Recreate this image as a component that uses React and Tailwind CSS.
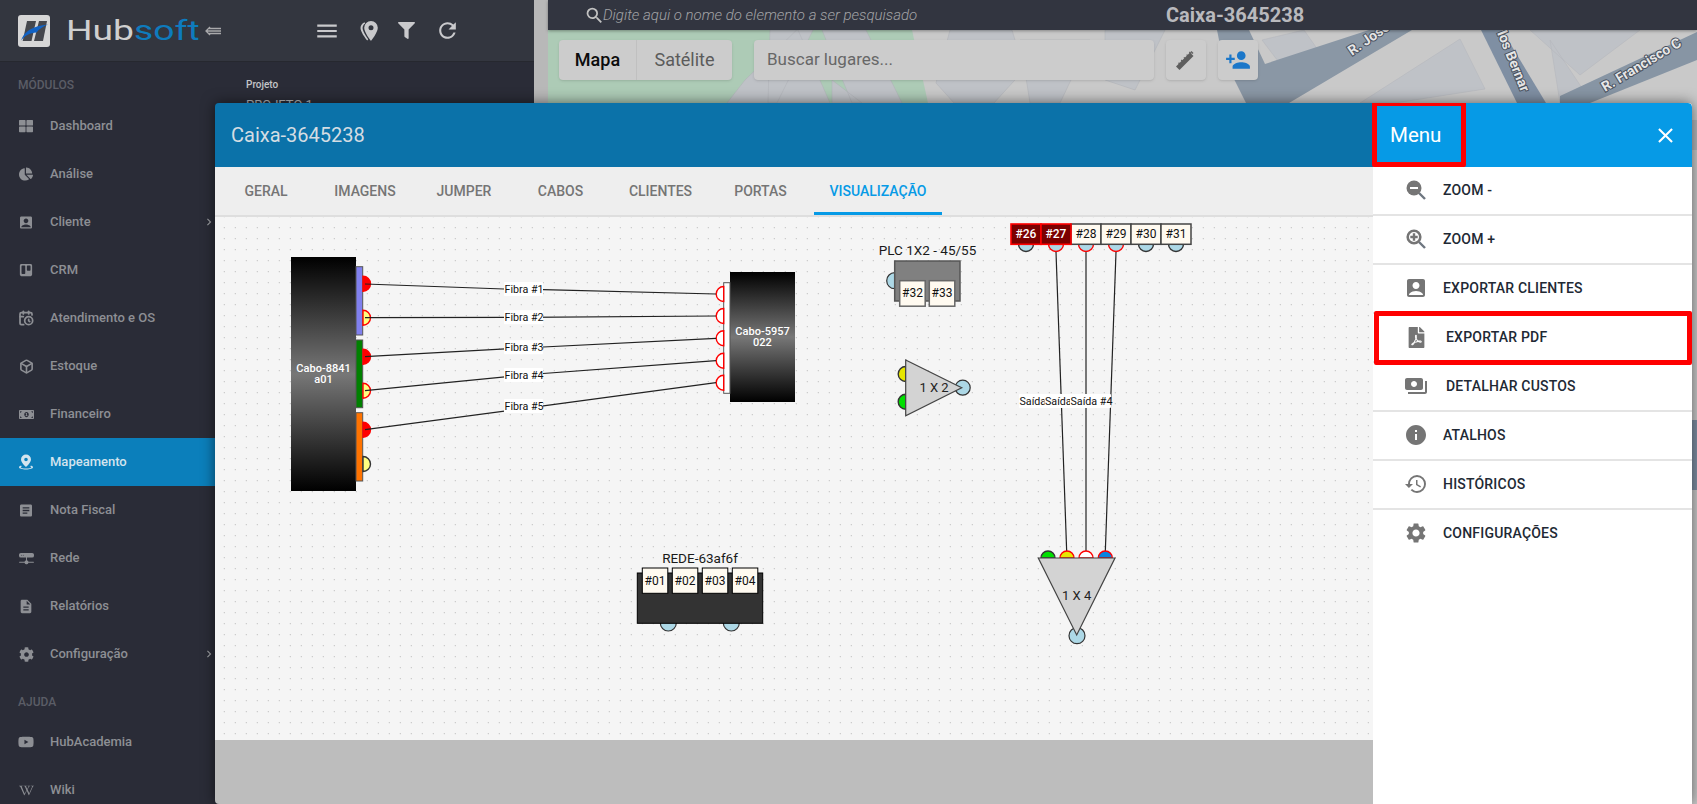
import { CalendarClock, Box } from "lucide-react";
import {
  FaThLarge, FaChartPie, FaTrello, FaMoneyBillAlt, FaCog, FaYoutube, FaWikipediaW, FaFilter, FaFilePdf,
} from "react-icons/fa";
import { BsHddNetworkFill } from "react-icons/bs";
import {
  MdAccountBox, MdArticle, MdDescription, MdMenu, MdRefresh, MdSearch, MdPersonAdd,
  MdPayments, MdInfo, MdHistory, MdSettings, MdClose, MdChevronRight,
} from "react-icons/md";

function PinDrop({ size = 16 }) {
  return (
    <svg width={size} height={size} viewBox="0 0 16 16" fill="currentColor">
      <path d="M8 0.5a5 5 0 0 0-5 5c0 3.4 5 7.5 5 7.500s5-4.100 5-7.500a5 5 0 0 0-5-5zm0 6.800a1.800 1.800 0 1 1 0-3.600 1.800 1.800 0 0 1 0 3.600z" />
      <path d="M3 11.500c-1.300.5-2 1.100-2 1.800 0 1.300 3.100 2.200 7 2.200s7-.9 7-2.200c0-.7-.7-1.300-2-1.800l-.8 1c.7.3 1.100.6 1.100.9 0 .5-2.300 1-5.300 1s-5.300-.5-5.300-1c0-.3.4-.6 1.100-.9z" />
    </svg>
  );
}

function DoublePin() {
  return (
    <svg width="18" height="22" viewBox="0 0 18 22" fill="#c9c9cc">
      <path d="M11 1a6.800 6.800 0 0 0-6.800 6.800c0 4.800 6.800 13.200 6.800 13.200s6.800-8.400 6.800-13.200A6.800 6.800 0 0 0 11 1zm0 9.300a2.500 2.500 0 1 1 0-5 2.500 2.500 0 0 1 0 5z" />
      <path d="M4.500 2.200C2 3.500.5 5.600.5 8c0 3.500 4.500 10 6.800 12.500l.9-1.200C5.800 15.800 2.600 11 2.600 8c0-1.900 1-3.500 2.600-4.500z" />
    </svg>
  );
}

function LogoMark() {
  return (
    <svg width="32" height="32" viewBox="0 0 32 32">
      <rect width="32" height="32" rx="3" fill="#d6d6d6" />
      <path d="M9 6h9l-4.500 20H4.700z" fill="#45474d" />
      <path d="M21 6h8l-4 20h-9z" fill="#45474d" />
      <path d="M3 25.500C6 16 15 11 30 9.500c-5 2-9 4.500-11.500 8-6.500.3-11.500 3-15.500 8z" fill="#1162c4" />
    </svg>
  );
}

function RulerIcon() {
  return (
    <svg width="26" height="26" viewBox="0 0 26 26" fill="#5e5e5e">
      <path d="M3 19.500 17 5.500l3.500 3.500-14 14z" />
      <path d="M16.500 6l-1.800-1.800.9-.9 1.800 1.800zM13.800 8.700l-1.800-1.800.9-.9 1.800 1.800zM11.100 11.400l-1.800-1.800.9-.9 1.800 1.800zM8.400 14.100l-1.800-1.800.9-.9 1.800 1.800zM5.700 16.800l-1.800-1.800.9-.9 1.800 1.800z" transform="translate(1.200 1.200)" />
      <path d="M18.500 4l2 2-1 1-2-2z" />
    </svg>
  );
}

function ZoomIcon({ plus }) {
  return (
    <svg width="24" height="24" viewBox="0 0 24 24">
      <line x1="15" y1="15" x2="21" y2="21" stroke="#6e7680" strokeWidth="2.400" />
      {plus ? (
        <>
          <circle cx="10" cy="10" r="6.300" fill="#ffffff" stroke="#757575" strokeWidth="2.600" />
          <path d="M10 6.300v7.400M6.300 10h7.400" stroke="#757575" strokeWidth="2.400" />
        </>
      ) : (
        <>
          <circle cx="10" cy="10" r="7.500" fill="#757575" />
          <rect x="6" y="9" width="8" height="2" fill="#ffffff" />
        </>
      )}
    </svg>
  );
}

const navTop = [
  ["Dashboard", <FaThLarge size={14} />],
  ["Análise", <FaChartPie size={14} />],
  ["Cliente", <MdAccountBox size={17} />, true],
  ["CRM", <FaTrello size={14} />],
  ["Atendimento e OS", <CalendarClock size={16} strokeWidth={2.6} />],
  ["Estoque", <Box size={15} strokeWidth={2.6} />],
  ["Financeiro", <FaMoneyBillAlt size={15} />],
  ["Mapeamento", <PinDrop />, false, true],
  ["Nota Fiscal", <MdArticle size={17} />],
  ["Rede", <BsHddNetworkFill size={15} />],
  ["Relatórios", <MdDescription size={17} />],
  ["Configuração", <FaCog size={15} />, true],
];
const navHelp = [
  ["HubAcademia", <FaYoutube size={16} />],
  ["Wiki", <FaWikipediaW size={15} />],
];

function NavRow({ label, icon, arrow, active }) {
  return (
    <div className={`flex h-12 shrink-0 items-center pl-[18px] pr-[18px] text-[13px] font-medium ${active ? "bg-[#0b7fbb] text-[#d3e4ee]" : "text-[#8d8f94]"}`}>
      <span className="flex w-[16px] justify-center">{icon}</span>
      <span className="ml-4">{label}</span>
      {arrow && <MdChevronRight size={14} className="ml-auto text-[#9a9ca0]" />}
    </div>
  );
}

function Sidebar() {
  return (
    <aside className="flex w-[234px] shrink-0 flex-col overflow-hidden bg-[#2a2c37]">
      <div className="flex h-[62px] shrink-0 items-center border-b border-[#26282f] bg-[#33363f] pl-[18px]">
        <LogoMark />
        <span className="ml-4 inline-block w-[139px] origin-left scale-x-[1.33] text-[28px] leading-none font-normal whitespace-nowrap text-[#cfcfcf]">
          Hub<span className="text-[#0e7bbd]">soft</span>
        </span>
        <svg width="16" height="10" viewBox="0 0 16 10" stroke="#a9a9ab" strokeWidth="1.300" fill="none">
          <path d="M5 1 1 5l4 4M1 5h15M4 2.500h12M4 7.500h12" />
        </svg>
      </div>
      <div className="h-10 shrink-0 pt-4 pl-[18px] text-xs leading-[14px] font-medium text-[#5b5d66]">MÓDULOS</div>
      {navTop.map(([label, icon, arrow, active]) => (
        <NavRow key={label} label={label} icon={icon} arrow={arrow} active={active} />
      ))}
      <div className="h-10 shrink-0 pt-[17px] pl-[18px] text-xs leading-[14px] font-medium text-[#5b5d66]">AJUDA</div>
      {navHelp.map(([label, icon]) => (
        <NavRow key={label} label={label} icon={icon} />
      ))}
    </aside>
  );
}

function SidePanel() {
  return (
    <section className="flex w-[300px] shrink-0 flex-col bg-[#2a2c37]">
      <div className="flex h-[62px] items-center justify-center gap-[20px] border-b border-[#26282f] bg-[#33363f] pl-[6px] text-[#c9c9cc]">
        <MdMenu size={26} />
        <DoublePin />
        <FaFilter size={17} />
        <MdRefresh size={25} />
      </div>
      <div className="pl-3 pt-4 text-[10px] leading-[14px] font-medium text-[#c4c5c8]">Projeto</div>
      <div className="pl-3 pt-[5px] text-[13px] leading-4 text-[#b5b6ba]">PROJETO 1</div>
    </section>
  );
}

function MapDrawing() {
  return (
    <svg className="absolute inset-0 h-full w-full" viewBox="548 0 1149 804" preserveAspectRatio="none">
      <rect x="548" y="0" width="1149" height="804" fill="#c9c9c9" />
      <path d="M548 30H912L928 103H548z" fill="#adcbb6" />
      <path d="M770 30h28l32 73h-62zM822 30h44l36 73h-50zM745 80l62-60 8 6-38 77h-50zM832 80l30 23h-30z" fill="#bfc2c7" stroke="#aeb1b6" strokeWidth="0.500" />
      <path d="M950 30h62l12 40-30 33h-40l-18-20zM1020 40h70l-30 63h-30zM1105 30h60l-30 60-30-10z" fill="#bfc2c7" stroke="#aeb1b6" strokeWidth="0.500" />
      <path d="M1262 40l42-10 28 40-36 15zM1360 103l100-64 25 50-90 14zM1530 30h110l-60 45zM1550 40l40 60-30 3z" fill="#bfc2c7" stroke="#b2b5ba" strokeWidth="0.500" />
      <path d="M1217 30h32l16 34 104-34h43l-123 73h-43l-24-48z" fill="#8a97a5" />
      <path d="M1481 30h21l44 73h-29z" fill="#7f8fa3" />
      <path d="M1560 103h30l107-43V32l-137 64z" fill="#8795a4" />
      <path d="M1692 420h5v70h-5z" fill="#7f8fa3" />
      <path d="M1692 120h5v30h-5z" fill="#b5b7bb" />
      <g fill="#e6e6e6" stroke="#49515e" strokeWidth="2" fontSize="14" fontWeight="700" style={{ paintOrder: "stroke" }}>
        <text x="1352" y="56" transform="rotate(-35 1352 56)">R. José</text>
        <text x="1497" y="33" transform="rotate(68 1497 33)">los Bernar</text>
        <text x="1605" y="92" transform="rotate(-31 1605 92)">R. Francisco C</text>
      </g>
    </svg>
  );
}

function MapArea() {
  return (
    <main className="relative ml-[14px] min-w-0 flex-1">
      <MapDrawing />
      <div className="relative flex h-[30px] items-center bg-[#323540] pl-[36px] shadow-[0_1px_3px_rgba(0,0,0,0.35)]">
        <MdSearch size={21} className="text-[#c2c2c2]" />
        <span className="ml-[-2px] text-[15px] font-light text-[#a2a3a6] italic">Digite aqui o nome do elemento a ser pesquisado</span>
        <span className="absolute left-[618px] text-xl leading-7 font-bold text-[#b9b9bd]">Caixa-3645238</span>
      </div>
      <div className="relative mt-[10px] flex h-10 pl-[11px]">
        <div className="flex overflow-hidden rounded-[4px] bg-[#cccccc] text-lg shadow-sm">
          <span className="flex w-[78px] items-center justify-center border-r border-[#c0c0c0] font-medium text-[#0c0c0c]">Mapa</span>
          <span className="flex w-[95px] items-center justify-center text-[#5b5b5b]">Satélite</span>
        </div>
        <div className="ml-[22px] flex w-[400px] items-center rounded-[4px] bg-[#cccccc] pl-[13px] text-[17px] text-[#676767] shadow-sm">Buscar lugares...</div>
        <div className="ml-3 flex w-10 items-center justify-center rounded-[4px] bg-[#cccccc] shadow-sm">
          <RulerIcon />
        </div>
        <div className="ml-3 flex w-10 items-center justify-center rounded-[4px] bg-[#cccccc] shadow-sm">
          <MdPersonAdd size={26} className="text-[#1b77c9]" />
        </div>
      </div>
    </main>
  );
}

function Semi({ x, y, r = 7.5, dir, fill, stroke = "#ff0000" }) {
  const d = dir === "right"
    ? `M${x} ${y - r}A${r} ${r} 0 0 1 ${x} ${y + r}Z`
    : dir === "left"
      ? `M${x} ${y - r}A${r} ${r} 0 0 0 ${x} ${y + r}Z`
      : `M${x - r} ${y}A${r} ${r} 0 0 1 ${x + r} ${y}Z`;
  return <path d={d} fill={fill} stroke={stroke} strokeWidth="1.400" />;
}

function Port({ x, y, w = 25.5, h = 25.5, name, fill = "#fffaf0", stroke = "#666666", color = "#111111", sw = 1.500, bold }) {
  return (
    <g>
      <rect x={x} y={y} width={w} height={h} fill={fill} stroke={stroke} strokeWidth={sw} />
      <text x={x + w / 2} y={y + h / 2 + 4} textAnchor="middle" fontSize="12" fill={color} fontWeight={bold ? 500 : 400}>{name}</text>
    </g>
  );
}

function Label({ x, y, w = 39, text, anchor = "middle" }) {
  const left = anchor === "middle" ? x - w / 2 : x;
  return (
    <g>
      <rect x={left} y={y - 7} width={w} height={14} rx="1" fill="#ffffff" />
      <text x={left + 0.500} y={y + 4} fontSize="10.700" fill="#111111">{text}</text>
    </g>
  );
}

const fibers = [
  ["Fibra #1", "365,284 504,289 543,289.600 716,294", 289],
  ["Fibra #2", "365,317.700 523,317.300 716,316", 317.300],
  ["Fibra #3", "365,356.700 523,348 716,338.300", 347.300],
  ["Fibra #4", "365,390.700 523,375 716,360.700", 375],
  ["Fibra #5", "365,429.700 523,408.700 716,382.700", 406],
];

function Diagram() {
  return (
    <svg className="absolute inset-0" width="1158" height="523" viewBox="215 217 1158 523">
      <defs>
        <linearGradient id="cable" x1="0" x2="0" y1="0" y2="1">
          <stop offset="0" stopColor="#000000" />
          <stop offset="0.5" stopColor="#777777" />
          <stop offset="1" stopColor="#000000" />
        </linearGradient>
      </defs>

      {/* cabo 1 */}
      <rect x="291" y="257" width="65" height="234" fill="url(#cable)" />
      <rect x="356" y="266.700" width="6.700" height="68.300" fill="#8080ee" stroke="#555555" />
      <rect x="356" y="340" width="6.700" height="67.700" fill="#008000" stroke="#555555" />
      <rect x="356" y="412.700" width="6.700" height="68.300" fill="#ff7300" stroke="#555555" />
      <Semi x={363} y={283.700} dir="right" fill="#ff0000" />
      <Semi x={363} y={317.700} dir="right" fill="#ffff80" />
      <Semi x={363} y={356.700} dir="right" fill="#ff0000" />
      <Semi x={363} y={390.700} dir="right" fill="#ffff80" />
      <Semi x={363} y={429.700} dir="right" fill="#ff0000" />
      <Semi x={363} y={464} dir="right" fill="#ffff80" stroke="#333333" />
      <text x="323.500" y="372" textAnchor="middle" fontSize="11" fontWeight="500" fill="#ffffff">Cabo-8841</text>
      <text x="323.500" y="383" textAnchor="middle" fontSize="11" fontWeight="500" fill="#ffffff">a01</text>

      {/* cabo 2 */}
      <rect x="730" y="272" width="65" height="130" fill="url(#cable)" />
      <rect x="723.700" y="282.700" width="6.300" height="110.600" fill="#ffffff" stroke="#555555" />
      {[294, 316, 338.300, 360.700, 382.700].map((y) => (
        <Semi key={y} x={723.700} y={y} dir="left" fill="#ffffff" />
      ))}
      <text x="762.500" y="335" textAnchor="middle" fontSize="11" fontWeight="500" fill="#ffffff">Cabo-5957</text>
      <text x="762.500" y="346" textAnchor="middle" fontSize="11" fontWeight="500" fill="#ffffff">022</text>

      {fibers.map(([name, points]) => (
        <polyline key={name} points={points} fill="none" stroke="#222222" strokeWidth="1.200" />
      ))}
      {fibers.map(([name, , y]) => (
        <Label key={name} x={523.500} y={y} text={name} />
      ))}

      {/* PLC */}
      <text x="927.500" y="255" textAnchor="middle" fontSize="13.500" fill="#1a1a1a">PLC 1X2 - 45/55</text>
      <circle cx="894.700" cy="280.700" r="8" fill="#add8e6" stroke="#333333" strokeWidth="1.200" />
      <rect x="894.700" y="261" width="65.300" height="40" fill="#808080" stroke="#555555" strokeWidth="1.500" />
      <Port x={899.700} y={280.700} name="#32" />
      <Port x={929.300} y={280.700} name="#33" />

      {/* splitter 1x2 */}
      <Semi x={905.700} y={374} dir="left" fill="#e6e600" stroke="#333333" />
      <Semi x={905.700} y={401.700} dir="left" fill="#00e000" stroke="#333333" />
      <circle cx="962.700" cy="387.700" r="7.500" fill="#add8e6" stroke="#333333" strokeWidth="1.200" />
      <path d="M905.700 360L961.700 387.700L905.700 415.700Z" fill="#d3d3d3" stroke="#444444" strokeWidth="1.200" />
      <text x="934" y="392" textAnchor="middle" fontSize="13" fill="#222222">1 X 2</text>

      {/* portas do topo */}
      {[
        [1026, "#333333"], [1056, "#ff0000"], [1086, "#ff0000"], [1116, "#ff0000"], [1146, "#333333"], [1176, "#333333"],
      ].map(([x, stroke]) => (
        <circle key={x} cx={x} cy="244" r="7.500" fill="#add8e6" stroke={stroke} strokeWidth="1.400" />
      ))}
      {["#28", "#29", "#30", "#31"].map((name, i) => (
        <Port key={name} x={1071 + i * 30} y={224} w={30} h={20.300} name={name} stroke="#444444" />
      ))}
      <Port x={1011} y={224} w={30} h={20.300} name="#26" fill="#7b0000" stroke="#ff0000" color="#ffffff" sw={1.600} bold />
      <Port x={1041} y={224} w={30} h={20.300} name="#27" fill="#7b0000" stroke="#ff0000" color="#ffffff" sw={1.600} bold />

      <line x1="1056" y1="252" x2="1066.700" y2="552" stroke="#222222" strokeWidth="1.200" />
      <line x1="1086" y1="252" x2="1086" y2="552" stroke="#777777" strokeWidth="2" />
      <line x1="1116" y1="252" x2="1105.300" y2="552" stroke="#222222" strokeWidth="1.200" />
      <Label x={1019} y={401} anchor="start" text="Saída #2" />
      <Label x={1044.500} y={401} anchor="start" text="Saída #3" />
      <Label x={1070} y={401} anchor="start" w={41} text="Saída #4" />

      {/* splitter 1x4 */}
      <circle cx="1077" cy="635.700" r="8" fill="#add8e6" stroke="#333333" strokeWidth="1.200" />
      <Semi x={1048} y={558} r={7} dir="up" fill="#00e000" stroke="#333333" />
      <Semi x={1067} y={558} r={7} dir="up" fill="#e6e600" />
      <Semi x={1086} y={558} r={7} dir="up" fill="#ffffff" />
      <Semi x={1105.300} y={558} r={7} dir="up" fill="#0a84e0" />
      <path d="M1038.300 558H1115L1076.700 635Z" fill="#d3d3d3" stroke="#444444" strokeWidth="1.200" />
      <text x="1076.700" y="600" textAnchor="middle" fontSize="13" fill="#222222">1 X 4</text>

      {/* rede */}
      <text x="700" y="563" textAnchor="middle" fontSize="13.500" fill="#1a1a1a">REDE-63af6f</text>
      <circle cx="668.300" cy="623" r="8" fill="#add8e6" stroke="#333333" strokeWidth="1.200" />
      <circle cx="731.300" cy="623" r="8" fill="#add8e6" stroke="#333333" strokeWidth="1.200" />
      <rect x="637.300" y="573" width="125.400" height="50.300" fill="#333333" stroke="#000000" />
      {["#01", "#02", "#03", "#04"].map((name, i) => (
        <Port key={name} x={642.300 + i * 30} y={568} h={25.300} name={name} stroke="#000000" sw={1} />
      ))}
    </svg>
  );
}

const tabs = [
  ["GERAL", "w-[99px]"],
  ["IMAGENS", "w-[99px]"],
  ["JUMPER", "w-[99px]"],
  ["CABOS", "w-[94px]"],
  ["CLIENTES", "w-[106px]"],
  ["PORTAS", "w-[94px]"],
];

const menuItems = [
  ["ZOOM -", <ZoomIcon />],
  ["ZOOM +", <ZoomIcon plus />],
  ["EXPORTAR CLIENTES", <MdAccountBox size={24} />],
  ["EXPORTAR PDF", <FaFilePdf size={21} />, true],
  ["DETALHAR CUSTOS", <MdPayments size={24} />, true],
  ["ATALHOS", <MdInfo size={24} />],
  ["HISTÓRICOS", <MdHistory size={24} />],
  ["CONFIGURAÇÕES", <MdSettings size={24} />],
];

function MenuPanel() {
  return (
    <div className="relative flex w-[319px] shrink-0 flex-col bg-white">
      <div className="flex h-[64px] items-center justify-between rounded-tr-[4px] bg-[#069ae6] pl-[17px] pr-[14px] text-[20.500px] text-white">
        <span>Menu</span>
        <MdClose size={25} />
      </div>
      {menuItems.map(([label, icon, shifted], i) => (
        <div key={label} className={`flex h-[49px] items-center border-b-2 pb-[1px] text-sm font-medium tracking-[0.2px] text-[#212934] ${i < menuItems.length - 1 ? "border-[#e4e4e4]" : "border-transparent"}`}>
          <span className="ml-[31px] flex w-[24px] justify-center text-[#757575]">{icon}</span>
          <span className={shifted ? "ml-[18px]" : "ml-[15px]"}>{label}</span>
        </div>
      ))}
      {/* marcações em vermelho do print */}
      <div className="absolute left-[-1px] top-[-2px] h-[66px] w-[94px] rounded-[2px] border-[5px] border-[#ff0000]" />
      <div className="absolute left-[1px] top-[208px] h-[54px] w-[318px] rounded-[2px] border-[5px] border-[#ff0000]" />
    </div>
  );
}

function Modal() {
  return (
    <div className="absolute left-[215px] top-[103px] bottom-0 flex w-[1477px] overflow-hidden rounded-t-[4px] rounded-bl-[4px] shadow-[0_0_14px_rgba(0,0,0,0.55)]">
      <div className="flex min-w-0 flex-1 flex-col">
        <div className="flex h-[64px] shrink-0 items-center bg-[#0b72a9] pl-4 text-xl text-[#d4dde3]">Caixa-3645238</div>
        <div className="flex h-[50px] shrink-0 border-b-2 border-[#dedede] bg-[#eeeeee] pl-[1.500px] text-sm font-medium text-[#757575]">
          {tabs.map(([tab, width]) => (
            <span key={tab} className={`flex items-center justify-center ${width}`}>{tab}</span>
          ))}
          <span className="ml-[6px] flex items-center border-b-[3px] border-[#069ae6] px-4 pt-[3px] text-[#069ae6]">VISUALIZAÇÃO</span>
        </div>
        <div className="relative flex-1 bg-[#f5f5f5] bg-[radial-gradient(circle,#b5b5b5_0.6px,transparent_0.9px)] bg-[length:11px_11px] bg-[position:3.8px_5.2px]">
          <Diagram />
        </div>
        <div className="h-16 shrink-0 bg-[#bdbdbd]" />
      </div>
      <MenuPanel />
    </div>
  );
}

export default function App() {
  return (
    <div className="relative flex h-screen w-full overflow-hidden bg-[#b8b8b8] font-['Roboto',sans-serif]">
      <Sidebar />
      <SidePanel />
      <MapArea />
      <Modal />
    </div>
  );
}
